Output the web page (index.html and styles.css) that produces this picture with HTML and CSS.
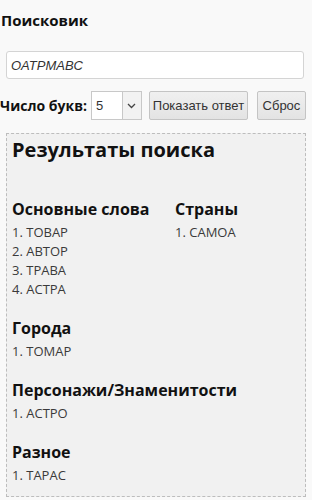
FILE: index.html
```html
<!DOCTYPE html>
<html lang="ru">
<head>
  <meta charset="UTF-8">
  <meta name="viewport" content="width=device-width, initial-scale=1.0">
  <title>Поисковик</title>
  <link rel="stylesheet" href="styles.css">
</head>
<body>
  <h3 class="title">Поисковик</h3>

  <input class="letters" type="text" value="OATPMABC">

  <div class="controls">
    <label class="count-label">Число букв:</label>
    <div class="select-wrap">
      <select class="count">
        <option>3</option>
        <option>4</option>
        <option selected>5</option>
        <option>6</option>
      </select>
      <span class="arrow">
        <svg width="9" height="6" viewBox="0 0 9 6"><path d="M1 1 L4.5 4.5 L8 1" fill="none" stroke="#444" stroke-width="1.3"/></svg>
      </span>
    </div>
    <button class="btn show">Показать ответ</button>
    <button class="btn reset">Сброс</button>
  </div>

  <div class="results">
    <h2>Результаты поиска</h2>

    <div class="columns">
      <div class="group">
        <h4>Основные слова</h4>
        <ol>
          <li>ТОВАР</li>
          <li>АВТОР</li>
          <li>ТРАВА</li>
          <li>АСТРА</li>
        </ol>
      </div>
      <div class="group">
        <h4>Страны</h4>
        <ol>
          <li>САМОА</li>
        </ol>
      </div>
    </div>

    <div class="group">
      <h4>Города</h4>
      <ol>
        <li>ТОМАР</li>
      </ol>
    </div>

    <div class="group">
      <h4>Персонажи/Знаменитости</h4>
      <ol>
        <li>АСТРО</li>
      </ol>
    </div>

    <div class="group">
      <h4>Разное</h4>
      <ol>
        <li>ТАРАС</li>
      </ol>
    </div>
  </div>
</body>
</html>
```

FILE: styles.css
```css
body {
  margin: 0;
  padding: 0;
  background: #f9f9f9;
  font-family: "Open Sans", "Noto Sans", sans-serif;
  color: #111;
}

.title {
  margin: 0;
  padding: 10px 0 0 1px;
  font-size: 15px;
  line-height: 20px;
  font-weight: bold;
}

.letters {
  display: block;
  box-sizing: border-box;
  width: 298px;
  height: 28px;
  margin: 21px 0 0 6px;
  padding: 0 4px;
  border: 1px solid #d4d4d4;
  border-radius: 3px;
  background: #fff;
  font-family: "Liberation Sans", Arial, sans-serif;
  font-style: italic;
  font-size: 13px;
  color: #333;
}

.controls {
  display: flex;
  align-items: center;
  margin-top: 12px;
  white-space: nowrap;
}

.count-label {
  flex-shrink: 0;
  font-size: 14px;
  font-weight: bold;
  line-height: 19px;
  margin-right: 4px;
}

.select-wrap {
  flex-shrink: 0;
  position: relative;
  width: 51px;
  height: 29px;
  margin-right: 7px;
}

.count {
  appearance: none;
  -webkit-appearance: none;
  box-sizing: border-box;
  width: 100%;
  height: 100%;
  padding: 0 0 0 4px;
  border: 1px solid #c8c8c8;
  border-radius: 0;
  background: #fff;
  font-family: "Liberation Sans", Arial, sans-serif;
  font-size: 13px;
  color: #333;
}

.arrow {
  position: absolute;
  top: 1px;
  right: 1px;
  bottom: 1px;
  width: 18px;
  display: flex;
  align-items: center;
  justify-content: center;
  border-left: 1px solid #c8c8c8;
  background: #f2f2f2;
  pointer-events: none;
}

.btn {
  flex-shrink: 0;
  box-sizing: border-box;
  height: 29px;
  padding: 0;
  border: 1px solid #c4c4c4;
  border-radius: 2px;
  background: linear-gradient(#f0f0f0, #e3e3e3);
  font-family: "Liberation Sans", Arial, sans-serif;
  font-size: 13px;
  color: #333;
  white-space: nowrap;
}

.show {
  width: 99px;
  margin-right: 9px;
}

.reset {
  width: 49px;
}

.results {
  box-sizing: border-box;
  width: 300px;
  margin: 13px 0 0 6px;
  padding: 2px 5px 11px;
  border: 1px dashed #bdbdbd;
  background: #f1f1f1;
}

.results h2 {
  margin: 0 0 35px;
  font-size: 20px;
  line-height: 27px;
  font-weight: bold;
}

.columns {
  display: grid;
  grid-template-columns: 163px auto;
}

.group {
  margin-bottom: 18px;
}

.group:last-child {
  margin-bottom: 0;
}

.group h4 {
  margin: 0;
  font-size: 16px;
  line-height: 22px;
  font-weight: bold;
}

.group ol {
  margin: 3px 0 0;
  padding: 0;
  list-style: none;
  counter-reset: item;
}

.group li {
  font-size: 13px;
  line-height: 19px;
  color: #3a3a3a;
  counter-increment: item;
}

.group li::before {
  content: counter(item) ". ";
}
```
